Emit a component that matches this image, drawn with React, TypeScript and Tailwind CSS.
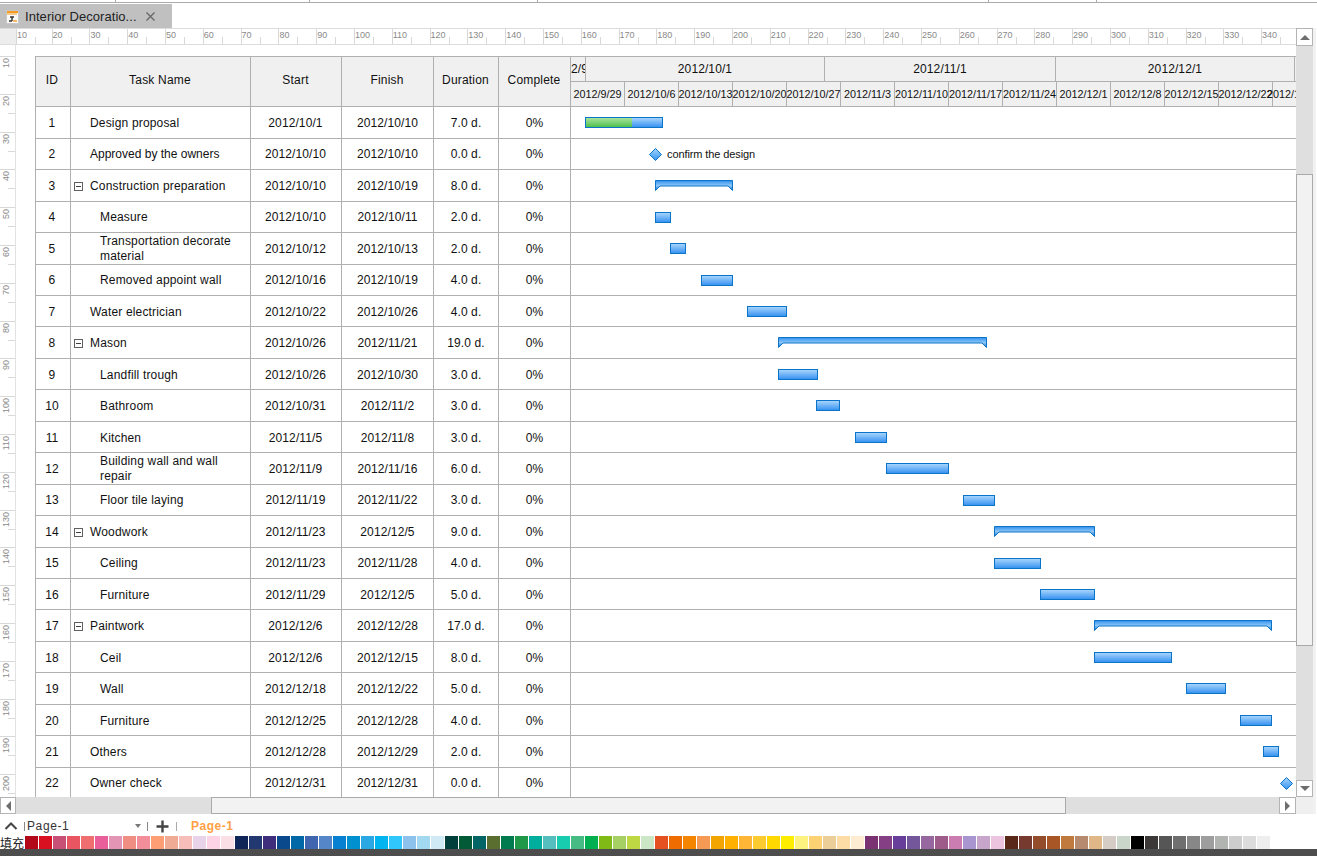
import React from "react";

const FONT = "font-['Liberation_Sans','Noto_Sans_CJK_SC',sans-serif]";

type Task = {
  id: number; name: string; start: string; finish: string; dur: string; h: number; low?: boolean;
  level: 0 | 1; group?: boolean; bar?: [number, number]; progress?: number; summary?: boolean; milestone?: number; note?: string; tight?: boolean;
};

const tasks: Task[] = [
  { id: 1, name: "Design proposal", start: "2012/10/1", finish: "2012/10/10", dur: "7.0 d.", h: 32, low: true, level: 0, bar: [585, 663], progress: 46 },
  { id: 2, name: "Approved by the owners", start: "2012/10/10", finish: "2012/10/10", dur: "0.0 d.", h: 31, level: 0, milestone: 655.5, note: "confirm the design", tight: true },
  { id: 3, name: "Construction preparation", start: "2012/10/10", finish: "2012/10/19", dur: "8.0 d.", h: 32, low: true, level: 0, group: true, bar: [655, 733], summary: true },
  { id: 4, name: "Measure", start: "2012/10/10", finish: "2012/10/11", dur: "2.0 d.", h: 31, level: 1, bar: [655, 671] },
  { id: 5, name: "Transportation decorate material", start: "2012/10/12", finish: "2012/10/13", dur: "2.0 d.", h: 32, level: 1, bar: [670, 686] },
  { id: 6, name: "Removed appoint wall", start: "2012/10/16", finish: "2012/10/19", dur: "4.0 d.", h: 31, level: 1, bar: [701, 733] },
  { id: 7, name: "Water electrician", start: "2012/10/22", finish: "2012/10/26", dur: "4.0 d.", h: 31, low: true, level: 0, bar: [747, 787] },
  { id: 8, name: "Mason", start: "2012/10/26", finish: "2012/11/21", dur: "19.0 d.", h: 32, low: true, level: 0, group: true, bar: [778, 987], summary: true },
  { id: 9, name: "Landfill trough", start: "2012/10/26", finish: "2012/10/30", dur: "3.0 d.", h: 31, low: true, level: 1, bar: [778, 818] },
  { id: 10, name: "Bathroom", start: "2012/10/31", finish: "2012/11/2", dur: "3.0 d.", h: 32, low: true, level: 1, bar: [816, 840] },
  { id: 11, name: "Kitchen", start: "2012/11/5", finish: "2012/11/8", dur: "3.0 d.", h: 31, low: true, level: 1, bar: [855, 887] },
  { id: 12, name: "Building wall and wall repair", start: "2012/11/9", finish: "2012/11/16", dur: "6.0 d.", h: 32, level: 1, bar: [886, 949] },
  { id: 13, name: "Floor tile laying", start: "2012/11/19", finish: "2012/11/22", dur: "3.0 d.", h: 31, level: 1, bar: [963, 995] },
  { id: 14, name: "Woodwork", start: "2012/11/23", finish: "2012/12/5", dur: "9.0 d.", h: 32, low: true, level: 0, group: true, bar: [994, 1095], summary: true },
  { id: 15, name: "Ceiling", start: "2012/11/23", finish: "2012/11/28", dur: "4.0 d.", h: 31, level: 1, bar: [994, 1041] },
  { id: 16, name: "Furniture", start: "2012/11/29", finish: "2012/12/5", dur: "5.0 d.", h: 31, low: true, level: 1, bar: [1040, 1095] },
  { id: 17, name: "Paintwork", start: "2012/12/6", finish: "2012/12/28", dur: "17.0 d.", h: 32, low: true, level: 0, group: true, bar: [1094, 1272], summary: true },
  { id: 18, name: "Ceil", start: "2012/12/6", finish: "2012/12/15", dur: "8.0 d.", h: 31, low: true, level: 1, bar: [1094, 1172] },
  { id: 19, name: "Wall", start: "2012/12/18", finish: "2012/12/22", dur: "5.0 d.", h: 32, low: true, level: 1, bar: [1186, 1226] },
  { id: 20, name: "Furniture", start: "2012/12/25", finish: "2012/12/28", dur: "4.0 d.", h: 31, low: true, level: 1, bar: [1240, 1272] },
  { id: 21, name: "Others", start: "2012/12/28", finish: "2012/12/29", dur: "2.0 d.", h: 32, low: true, level: 0, bar: [1263, 1279] },
  { id: 22, name: "Owner check", start: "2012/12/31", finish: "2012/12/31", dur: "0.0 d.", h: 31, level: 0, milestone: 1286.5 },
];

const weeks = ["2012/9/29", "2012/10/6", "2012/10/13", "2012/10/20", "2012/10/27", "2012/11/3", "2012/11/10", "2012/11/17", "2012/11/24", "2012/12/1", "2012/12/8", "2012/12/15", "2012/12/22"];

const swatches = [
  "#b30818", "#d9101f", "#c85077", "#ea5562", "#ef6e70", "#e85f9a", "#e295b5", "#f08e84", "#f28d9a", "#fd9e75", "#f0ab94", "#f6bdb9", "#e8d3e8", "#fdd4e5", "#fae0e6",
  "#0f2558", "#223870", "#3f2e7c", "#0a4a8c", "#0068a6", "#4066b0", "#5587c8", "#0780d2", "#0090d0", "#2aa8e4", "#00b4f0", "#30c8fc", "#8dc2ec", "#a2d8f0", "#cfeaf5",
  "#013f3c", "#025a36", "#006564", "#5a6e30", "#007b4f", "#1f9847", "#00ae9e", "#55bfc0", "#18ccb0", "#46bc84", "#00b050", "#80ba16", "#a6d064", "#bdd842", "#cce7c6",
  "#e65122", "#ef6c00", "#f38500", "#f49a55", "#f2a500", "#ffb000", "#ffb636", "#fbcb30", "#ffd800", "#ffed00", "#fdf180", "#fed272", "#ecce98", "#fedca6", "#fdebd2",
  "#7b3273", "#843f85", "#673f9a", "#74579b", "#96689f", "#9e5c8a", "#cb7cb0", "#a996d0", "#c8a6cc", "#edc4df",
  "#5a2818", "#763a2e", "#944d2a", "#a85626", "#c17a3e", "#b68a6e", "#e0b888", "#d5cdc5", "#cbd6ca",
  "#000000", "#3c3838", "#565656", "#6f6f6f", "#878787", "#9e9e9e", "#b2b4b2", "#cccdcc", "#dcdcdc", "#eeeeee",
];

const CHART_X = 571;
const rowGrid = "grid grid-cols-[35px_180px_91px_92px_65px_72px_725px]";
const cell = "flex items-center justify-center border-r border-[#b0b0b0] text-center tracking-[0.1px]";
const headCell = "flex items-center justify-center border-r border-[#b0b0b0] pr-[1px] pb-[3px] text-center tracking-[0.2px]";

function TabIcon() {
  return (
    <svg width="13" height="14" viewBox="0 0 13 14" className="flex-none">
      <rect x="0.5" y="0.5" width="12" height="13" fill="#fafafa" stroke="#c8c8c8" />
      <rect x="1" y="1" width="11" height="2" fill="#f59a23" />
      <path d="M2 3v2M4 3v2M6 3v2M8 3v2M10 3v2" stroke="#f59a23" strokeWidth="1" />
      <path d="M4 7h4M6 7v4M3 11h3" stroke="#333" strokeWidth="1.4" fill="none" />
      <path d="M7 11h4" stroke="#f59a23" strokeWidth="1.4" />
    </svg>
  );
}

function TopRuler() {
  const labels = Array.from({ length: 34 }, (_, i) => (i + 1) * 10);
  return (
    <div className="flex h-[17px] flex-none border-b border-t border-[#dcdcdc] bg-white">
      <div className="w-[16px] flex-none bg-[#ededed]" />
      <div className="flex min-w-0 flex-1 overflow-hidden">
        {labels.map((n, i) => (
          <div key={n} className={`relative h-full flex-none border-l border-[#d8d8d8] text-[9px] leading-[12px] text-[#8a8a8a] ${i === 0 ? "w-[35.6px]" : "w-[37.8px]"}`}>
            {n}
            <div className="absolute bottom-0 left-[18px] h-[7px] w-px bg-[#d8d8d8]" />
          </div>
        ))}
      </div>
    </div>
  );
}

function LeftRuler() {
  const labels = Array.from({ length: 20 }, (_, i) => (i + 1) * 10);
  return (
    <div className="flex w-[16px] flex-none flex-col overflow-hidden border-r border-[#e2e2e2] pt-[11px]">
      {labels.map((n) => (
        <div key={n} className="relative h-[37.8px] flex-none border-t border-[#d8d8d8] pl-[1px] pt-[1px] text-[9px] leading-[10px] text-[#8a8a8a]">
          <span className="inline-block rotate-180 [writing-mode:vertical-rl]">{n}</span>
          <div className="absolute right-0 top-[18px] h-px w-[7px] bg-[#d8d8d8]" />
        </div>
      ))}
    </div>
  );
}

function Minus() {
  return (
    <svg width="9" height="9" viewBox="0 0 9 9" className="flex-none">
      <rect x="0.5" y="0.5" width="8" height="8" fill="#fff" stroke="#606060" />
      <path d="M2 4.5h5" stroke="#404040" />
    </svg>
  );
}

function Diamond({ id }: { id: number }) {
  return (
    <svg width="13" height="13" viewBox="0 0 13 13" className="flex-none">
      <defs>
        <linearGradient id={`d${id}`} x1="0" y1="0" x2="0" y2="1">
          <stop offset="0" stopColor="#a4d4fc" />
          <stop offset="1" stopColor="#3593f0" />
        </linearGradient>
      </defs>
      <path d="M6.5 0.5L12.5 6.5L6.5 12.5L0.5 6.5Z" fill={`url(#d${id})`} stroke="#0b74c9" />
    </svg>
  );
}

function Summary({ id, w }: { id: number; w: number }) {
  return (
    <svg width={w} height="11" viewBox={`0 0 ${w} 11`} className="block">
      <defs>
        <linearGradient id={`s${id}`} x1="0" y1="0" x2="0" y2="1">
          <stop offset="0" stopColor="#2f8fee" />
          <stop offset="0.5" stopColor="#8cc6f8" />
          <stop offset="1" stopColor="#0b74c9" />
        </linearGradient>
      </defs>
      <path d={`M0.5 0.5H${w - 0.5}V10.5L${w - 5} 6H5L0.5 10.5Z`} fill={`url(#s${id})`} stroke="#0b74c9" />
    </svg>
  );
}

function ChartCell({ t }: { t: Task }) {
  return (
    <div className="relative overflow-hidden">
      {t.bar && (
        <div className="absolute top-[10px]" style={{ left: t.bar[0] - CHART_X, width: t.bar[1] - t.bar[0] }}>
          {t.summary ? (
            <Summary id={t.id} w={t.bar[1] - t.bar[0]} />
          ) : (
            <div className="flex h-[11px] border border-[#0b74c9] bg-linear-to-b from-[#a4d4fc] to-[#3593f0]">
              {t.progress && <div className="h-full bg-linear-to-b from-[#a6e49a] to-[#4cc04c]" style={{ width: t.progress }} />}
            </div>
          )}
        </div>
      )}
      {t.milestone && (
        <div className="absolute top-[9px] flex items-center gap-[5px]" style={{ left: t.milestone - 6.5 - CHART_X }}>
          <Diamond id={t.id} />
          {t.note && <span className="whitespace-nowrap text-[11px] leading-[13px] tracking-[-0.1px]">{t.note}</span>}
        </div>
      )}
    </div>
  );
}

function Header() {
  return (
    <div className={`${rowGrid} h-[50px] flex-none border-b border-[#b0b0b0] bg-[#f0f0f0]`}>
      <div className={`${headCell} pr-[2px]`}>ID</div>
      <div className={headCell}>Task Name</div>
      <div className={headCell}>Start</div>
      <div className={headCell}>Finish</div>
      <div className={headCell}>Duration</div>
      <div className={headCell}>Complete</div>
      <div className="flex min-w-0 flex-col overflow-hidden">
        <div className="flex h-[25px] flex-none border-b border-[#b0b0b0] tracking-[0.1px]">
          <div className="flex w-[15px] flex-none items-center overflow-hidden whitespace-nowrap border-r border-[#b0b0b0]">2/9</div>
          <div className="flex w-[239px] flex-none items-center justify-center border-r border-[#b0b0b0]">2012/10/1</div>
          <div className="flex w-[231px] flex-none items-center justify-center border-r border-[#b0b0b0]">2012/11/1</div>
          <div className="flex w-[239px] flex-none items-center justify-center border-r border-[#b0b0b0]">2012/12/1</div>
        </div>
        <div className="flex min-h-0 flex-1 text-[10.8px]">
          {weeks.map((w) => (
            <div key={w} className="flex w-[54px] flex-none items-center justify-center whitespace-nowrap border-r border-[#b0b0b0]">{w}</div>
          ))}
          <div className="flex w-[54px] flex-none items-center whitespace-nowrap">
            <span className="-ml-[6px]">2012/12/29</span>
          </div>
        </div>
      </div>
    </div>
  );
}

function Row({ t }: { t: Task }) {
  const low = t.low ? (t.h === 32 ? "pt-[1px]" : "pt-[2px]") : "";
  return (
    <div className={`${rowGrid} flex-none border-b border-[#b0b0b0] bg-white`} style={{ height: t.h }}>
      <div className={`${cell} ${low} pr-[2px]`}>{t.id}</div>
      <div className={`flex items-center border-r border-[#b0b0b0] ${t.low ? "leading-[14px]" : "leading-[15px]"} ${t.tight ? "" : "tracking-[0.17px]"} ${low} ${t.level === 1 ? "pl-[29px] pr-[10px]" : t.group ? "gap-[7px] pl-[3px]" : "pl-[19px]"}`}>
        {t.group && <Minus />}
        <span>{t.name}</span>
      </div>
      <div className={`${cell} ${low} pr-[1px]`}>{t.start}</div>
      <div className={`${cell} ${low}`}>{t.finish}</div>
      <div className={`${cell} ${low}`}>{t.dur}</div>
      <div className={`${cell} ${low}`}>0%</div>
      <ChartCell t={t} />
    </div>
  );
}

function VScroll() {
  return (
    <div className="flex w-[17px] flex-none flex-col bg-[#dfdfdf]">
      <div className="flex h-[18px] flex-none items-center justify-center border border-[#b4b4b4] bg-white">
        <div className="h-0 w-0 border-x-[5px] border-b-[5px] border-x-transparent border-b-[#6e6e6e]" />
      </div>
      <div className="flex-1 pt-[128px] pb-[134px]">
        <div className="h-full border border-[#aaaaaa] bg-[#f2f2f2]" />
      </div>
      <div className="flex h-[17px] flex-none items-center justify-center border border-[#b4b4b4] bg-white">
        <div className="h-0 w-0 border-x-[5px] border-t-[5px] border-x-transparent border-t-[#6e6e6e]" />
      </div>
      <div className="h-[17px] flex-none bg-[#efefef]" />
    </div>
  );
}

function HScroll() {
  return (
    <div className="flex h-[17px] flex-none bg-[#dfdfdf]">
      <div className="flex w-[16px] flex-none items-center justify-center border border-[#b4b4b4] bg-white">
        <div className="h-0 w-0 border-y-[5px] border-r-[5px] border-y-transparent border-r-[#6e6e6e]" />
      </div>
      <div className="w-[195px] flex-none" />
      <div className="w-[855px] flex-none border border-[#aaaaaa] bg-[#f2f2f2]" />
      <div className="flex-1" />
      <div className="flex w-[17px] flex-none items-center justify-center border border-[#b4b4b4] bg-white">
        <div className="h-0 w-0 border-y-[5px] border-l-[5px] border-y-transparent border-l-[#6e6e6e]" />
      </div>
    </div>
  );
}

function PageBar() {
  return (
    <div className="flex h-[22px] flex-none items-center pt-[2px] text-[12px] text-[#333]">
      <svg width="14" height="8" viewBox="0 0 14 8" className="ml-[4px] flex-none">
        <path d="M1.5 7L7 1.5L12.5 7" fill="none" stroke="#444" strokeWidth="2" />
      </svg>
      <div className="ml-[6px] h-[9px] w-px flex-none bg-[#888]" />
      <span className="ml-[2px] w-[108px] flex-none tracking-[0.6px]">Page-1</span>
      <div className="h-0 w-0 flex-none border-x-[3.5px] border-t-[4px] border-x-transparent border-t-[#777]" />
      <div className="ml-[6px] h-[9px] w-px flex-none bg-[#888]" />
      <svg width="13" height="13" viewBox="0 0 13 13" className="ml-[8px] flex-none">
        <path d="M6.5 0.5V12.5M0.5 6.5H12.5" stroke="#444" strokeWidth="2.4" />
      </svg>
      <div className="ml-[7px] h-[9px] w-px flex-none bg-[#aaa]" />
      <span className="ml-[14px] font-bold tracking-[0.5px] text-[#ff9f45]">Page-1</span>
    </div>
  );
}

function ColorBar() {
  return (
    <div className="flex h-[13px] flex-none items-start">
      <span className="w-[25px] flex-none text-[12px] leading-[17px] text-[#222]">填充</span>
      <div className="flex h-full gap-px">
        {swatches.map((c, i) => (
          <div key={i} className="h-full w-[13px] flex-none" style={{ backgroundColor: c }} />
        ))}
      </div>
    </div>
  );
}

export default function App() {
  const topCells = [116, 194, 228, 451, 108];
  return (
    <div className={`flex h-[856px] w-[1317px] flex-col overflow-hidden bg-white text-[12px] leading-[14px] text-[#111] ${FONT}`}>
      <div className="flex h-[4px] flex-none items-start">
        <div className="flex h-[3px] w-full border-b border-[#aaaaaa]">
          {topCells.map((w, i) => (
            <div key={i} className="flex-none border-r border-[#aaaaaa]" style={{ width: w }} />
          ))}
        </div>
      </div>
      <div className="flex h-[24px] flex-none">
        <div className="flex w-[172px] flex-none items-center bg-[#c0c0c0] pl-[6px] pt-[1px] text-[13px] text-[#222]">
          <TabIcon />
          <span className="ml-[6px] w-[121px] flex-none whitespace-nowrap tracking-[0.05px]">Interior Decoratio...</span>
          <svg width="9" height="9" viewBox="0 0 9 9" className="flex-none">
            <path d="M0.5 0.5L8.5 8.5M8.5 0.5L0.5 8.5" stroke="#666" strokeWidth="1.3" />
          </svg>
        </div>
      </div>
      <div className="flex min-h-0 flex-1 pr-[4px]">
        <div className="flex w-[1296px] min-w-0 flex-none flex-col">
          <TopRuler />
          <div className="flex min-h-0 flex-1">
            <LeftRuler />
            <div className="min-w-0 flex-1 overflow-hidden pl-[19px] pt-[11px]">
              <div className="flex w-[1261px] flex-col border-l border-t border-[#b0b0b0]">
                <Header />
                {tasks.map((t) => (
                  <Row key={t.id} t={t} />
                ))}
              </div>
            </div>
          </div>
          <HScroll />
        </div>
        <VScroll />
        <div className="w-[3px] flex-none bg-[#f2f2f2]" />
      </div>
      <PageBar />
      <ColorBar />
      <div className="h-[7px] flex-none bg-[#4d4d4d]" />
    </div>
  );
}
